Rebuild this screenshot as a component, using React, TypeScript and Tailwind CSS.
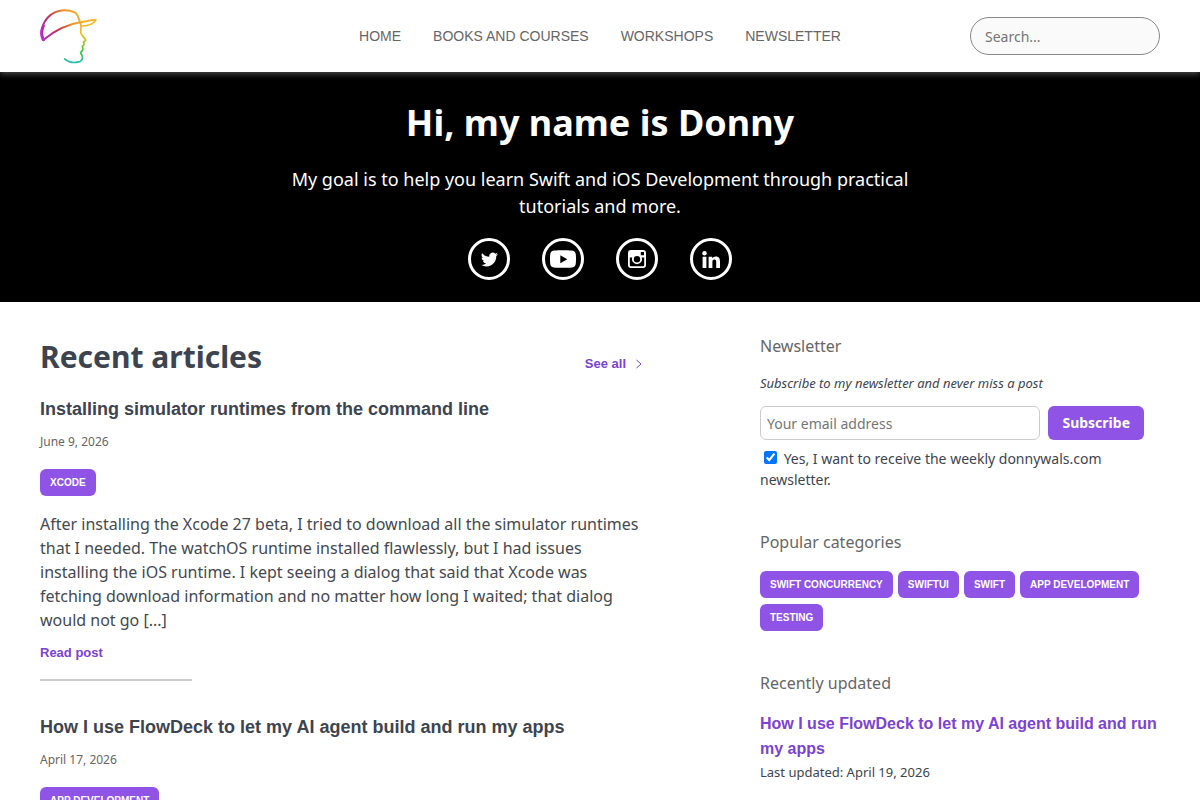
import type { ReactNode } from "react";

const NAV_LINKS = ["Home", "Books and Courses", "Workshops", "Newsletter"];

const CATEGORIES = ["Swift Concurrency", "SwiftUI", "Swift", "App Development", "Testing"];

interface Article {
  title: string;
  date: string;
  tags: string[];
  excerpt?: string;
}

const ARTICLES: Article[] = [
  {
    title: "Installing simulator runtimes from the command line",
    date: "June 9, 2026",
    tags: ["Xcode"],
    excerpt:
      "After installing the Xcode 27 beta, I tried to download all the simulator runtimes that I needed. The watchOS runtime installed flawlessly, but I had issues installing the iOS runtime. I kept seeing a dialog that said that Xcode was fetching download information and no matter how long I waited; that dialog would not go [...]",
  },
  {
    title: "How I use FlowDeck to let my AI agent build and run my apps",
    date: "April 17, 2026",
    tags: ["App Development"],
  },
];

const Logo = () => (
  <svg viewBox="30 27 171 165" className="w-[57px] h-[55px]" fill="none" aria-hidden="true">
    <defs>
      <linearGradient id="hat" gradientUnits="userSpaceOnUse" x1="36" y1="122" x2="150" y2="50">
        <stop offset="0" stopColor="#c026d3" />
        <stop offset="0.2" stopColor="#b52aa8" />
        <stop offset="0.42" stopColor="#c2304f" />
        <stop offset="0.75" stopColor="#ee8a2a" />
        <stop offset="1" stopColor="#f5b52b" />
      </linearGradient>
      <linearGradient id="face" gradientUnits="userSpaceOnUse" x1="150" y1="68" x2="140" y2="188">
        <stop offset="0" stopColor="#f0a62b" />
        <stop offset="0.3" stopColor="#e8c21c" />
        <stop offset="0.48" stopColor="#9fc91c" />
        <stop offset="0.7" stopColor="#3fc23a" />
        <stop offset="1" stopColor="#2bbfb0" />
      </linearGradient>
    </defs>
    <g strokeLinecap="round" strokeLinejoin="round">
      <path
        d="M40 120C28 98 38 66 58 48C78 28 112 27 134 37C144 42 147 56 151 70"
        stroke="url(#hat)"
        strokeWidth="6"
      />
      <path d="M40 119C33 107 34 92 40 78" stroke="url(#hat)" strokeWidth="9" />
      <path d="M40 120C70 95 105 74 150 67C168 64 185 60 197 60" stroke="url(#hat)" strokeWidth="6" />
      <path d="M197 60C193 70 177 77 156 78" stroke="#f2b824" strokeWidth="5" />
      <path
        d="M151 69C156 79 150 91 153 100C157 109 164 113 167 120C168 124 159 123 160 127C164 132 162 136 157 139C158 144 161 149 156 153C150 157 152 162 156 166C159 174 157 182 149 185C132 190 116 187 104 177"
        stroke="url(#face)"
        strokeWidth="5"
      />
    </g>
  </svg>
);

const TwitterIcon = () => (
  <svg viewBox="0 0 24 24" className="w-[17px] h-[17px]" fill="currentColor" aria-hidden="true">
    <path d="M23.95 4.57a10 10 0 0 1-2.82.77 4.96 4.96 0 0 0 2.16-2.72c-.95.56-2 .96-3.13 1.18a4.92 4.92 0 0 0-8.38 4.48C7.69 8.1 4.07 6.13 1.64 3.16a4.92 4.92 0 0 0 1.52 6.57 4.9 4.9 0 0 1-2.23-.61v.06a4.92 4.92 0 0 0 3.95 4.83 5 5 0 0 1-2.21.08 4.94 4.94 0 0 0 4.6 3.42A9.87 9.87 0 0 1 0 19.54a14 14 0 0 0 7.55 2.21c9.05 0 14-7.5 14-13.98 0-.21 0-.42-.02-.63a9.94 9.94 0 0 0 2.46-2.55z" />
  </svg>
);

const YoutubeIcon = () => (
  <svg viewBox="0 0 26 18" className="w-[26px] h-[18px]" aria-hidden="true">
    <path
      fill="currentColor"
      fillRule="evenodd"
      d="M4 .6C9 0 17 0 22 .6c2.600.3 3.600 1.600 3.800 4 .3 3 .3 5.800 0 8.800-.2 2.400-1.200 3.700-3.800 4-5 .6-13 .6-18 0-2.600-.3-3.600-1.600-3.800-4-.3-3-.3-5.800 0-8.800C.4 2.200 1.400.9 4 .6zM10.300 5.200v8l7-4z"
    />
  </svg>
);

const InstagramIcon = () => (
  <svg viewBox="0 0 18 18" className="w-[18px] h-[18px]" aria-hidden="true">
    <path
      fill="currentColor"
      fillRule="evenodd"
      d="M3 0h12a3 3 0 0 1 3 3v12a3 3 0 0 1-3 3H3a3 3 0 0 1-3-3V3a3 3 0 0 1 3-3zM12.800 2v3.200H16V2zM1.800 7.500V15a1.200 1.200 0 0 0 1.200 1.200h12a1.200 1.200 0 0 0 1.200-1.200V7.500h-2.500a5 5 0 1 1-9.400 0zM9 6a3.200 3.200 0 1 0 0 6.400A3.200 3.200 0 0 0 9 6z"
    />
  </svg>
);

const LinkedinIcon = () => (
  <svg viewBox="0 0 18 17" className="w-[18px] h-[17px]" fill="currentColor" aria-hidden="true">
    <circle cx="2.500" cy="2.200" r="2.200" />
    <path d="M.6 5.700h3.800V17H.6zM6.600 5.700h3.600v1.600c.6-1.100 1.900-1.900 3.600-1.900 3.300 0 4.200 2.100 4.200 5.200V17h-3.800v-5.700c0-1.500-.2-2.700-1.800-2.700s-2 1.200-2 2.600V17H6.600z" />
  </svg>
);

const SocialLink = ({ label, children }: { label: string; children: ReactNode }) => (
  <a
    href="#"
    aria-label={label}
    className="flex items-center justify-center w-[42px] h-[42px] rounded-full border-3 border-white text-white"
  >
    {children}
  </a>
);

const Tag = ({ name }: { name: string }) => (
  <a
    href="#"
    className="inline-block rounded-md bg-[#8f53e6] px-[10px] py-[6px] font-['Liberation_Sans',Arial,sans-serif] text-[10px] leading-[15px] font-bold uppercase text-white"
  >
    {name}
  </a>
);

const ArticleCard = ({ article }: { article: Article }) => (
  <article>
    <h3 className="font-['Liberation_Sans',Arial,sans-serif] text-lg leading-[27px] font-bold">
      <a href="#">{article.title}</a>
    </h3>
    <p className="mt-[10px] text-xs leading-[18px] text-[#666]">{article.date}</p>
    <div className="mt-[18px] flex flex-wrap gap-[5px]">
      {article.tags.map((tag) => (
        <Tag key={tag} name={tag} />
      ))}
    </div>
    {article.excerpt && (
      <>
        <p className="mt-4 text-base text-[#444950]">{article.excerpt}</p>
        <a
          href="#"
          className="mt-[11px] block font-['Liberation_Sans',Arial,sans-serif] text-[13px] leading-5 font-bold text-[#7b43cf]"
        >
          Read post
        </a>
        <hr className="mt-4 w-1/4 border-t-2 border-[#ccc]" />
      </>
    )}
  </article>
);

const Header = () => (
  <header className="relative z-10 grid h-[72px] grid-cols-[1fr_auto_1fr] items-center bg-white px-10 shadow-[0_2px_6px_rgba(255,255,255,0.3)]">
    <a href="#" aria-label="Donny Wals">
      <Logo />
    </a>
    <nav className="flex gap-8 font-['Liberation_Sans',Arial,sans-serif] text-sm uppercase text-[#666]">
      {NAV_LINKS.map((link) => (
        <a key={link} href="#">
          {link}
        </a>
      ))}
    </nav>
    <input
      type="search"
      aria-label="Search"
      placeholder="Search..."
      className="h-[38px] w-[190px] justify-self-end rounded-full border border-[#888] bg-[#fafafa] px-[14px] text-sm placeholder:text-[#757575]"
    />
  </header>
);

const Hero = () => (
  <section className="flex flex-col items-center bg-black px-10 pt-6 pb-[22px] text-center text-white">
    <h1 className="text-4xl leading-[54px] font-bold">Hi, my name is Donny</h1>
    <p className="mt-4 max-w-[640px] text-lg leading-[27px]">
      My goal is to help you learn Swift and iOS Development through practical tutorials and more.
    </p>
    <div className="mt-[18px] flex gap-8">
      <SocialLink label="Twitter">
        <TwitterIcon />
      </SocialLink>
      <SocialLink label="YouTube">
        <YoutubeIcon />
      </SocialLink>
      <SocialLink label="Instagram">
        <InstagramIcon />
      </SocialLink>
      <SocialLink label="LinkedIn">
        <LinkedinIcon />
      </SocialLink>
    </div>
  </section>
);

const Sidebar = () => (
  <aside className="flex flex-col gap-10">
    <section>
      <h2 className="text-base text-[#666]">Newsletter</h2>
      <p className="mt-[15px] text-[13px] leading-5 italic">Subscribe to my newsletter and never miss a post</p>
      <form className="mt-[13px]" onSubmit={(e) => e.preventDefault()}>
        <div className="flex gap-2 pr-4">
          <input
            type="email"
            aria-label="Email address"
            placeholder="Your email address"
            className="h-[34px] min-w-0 flex-1 rounded-md border border-[#ccc] px-[6px] text-sm placeholder:text-[#757575]"
          />
          <button type="submit" className="h-[34px] rounded-md bg-[#8f53e6] px-[14px] text-sm font-bold text-white">
            Subscribe
          </button>
        </div>
        <label className="mt-2 block text-sm leading-[21px]">
          <input type="checkbox" defaultChecked className="mr-[3px] ml-1 h-[13px] w-[13px]" /> Yes, I want to receive
          the weekly donnywals.com newsletter.
        </label>
      </form>
    </section>

    <section>
      <h2 className="text-base text-[#666]">Popular categories</h2>
      <div className="mt-[17px] flex flex-wrap gap-x-[5px] gap-y-[6px]">
        {CATEGORIES.map((category) => (
          <Tag key={category} name={category} />
        ))}
      </div>
    </section>

    <section>
      <h2 className="text-base text-[#666]">Recently updated</h2>
      <a
        href="#"
        className="mt-4 block font-['Liberation_Sans',Arial,sans-serif] text-base leading-[25px] font-bold text-[#7b43cf]"
      >
        How I use FlowDeck to let my AI agent build and run my apps
      </a>
      <p className="text-[13px] leading-[22px]">Last updated: April 19, 2026</p>
    </section>
  </aside>
);

export default function App() {
  return (
    <div className="h-screen overflow-x-hidden overflow-y-auto bg-white font-['Noto_Sans',sans-serif] text-[#3d4450] [scrollbar-width:none]">
      <Header />
      <Hero />
      <div className="grid grid-cols-[1fr_400px] gap-28 px-10 pt-8">
        <main>
          <div className="flex items-end justify-between">
            <h2 className="text-3xl leading-[46px] font-bold">Recent articles</h2>
            <a
              href="#"
              className="mr-1 mb-[6px] flex items-center gap-2 font-['Liberation_Sans',Arial,sans-serif] text-[13px] leading-5 font-bold text-[#7b43cf]"
            >
              See all
              <svg viewBox="0 0 10 10" className="h-[10px] w-[10px]" fill="none" stroke="currentColor" aria-hidden="true">
                <path d="M2.500 1l4.500 4-4.500 4" />
              </svg>
            </a>
          </div>
          <div className="mt-4 flex flex-col gap-[33px]">
            {ARTICLES.map((article) => (
              <ArticleCard key={article.title} article={article} />
            ))}
          </div>
        </main>
        <Sidebar />
      </div>
    </div>
  );
}
